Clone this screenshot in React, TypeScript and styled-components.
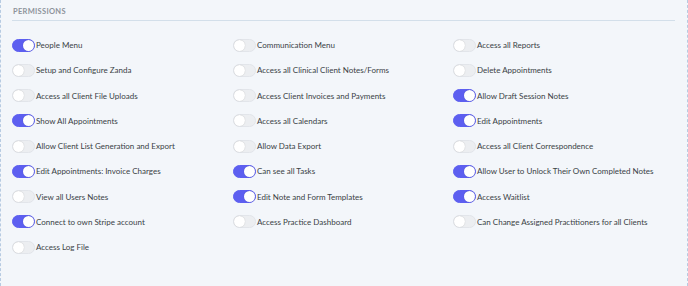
import React from 'react';
import styled, { createGlobalStyle } from 'styled-components';

const GlobalStyle = createGlobalStyle`
    html, body {
        margin: 0;
        padding: 0;
        background: #f3f6fa;
    }
`;

const Panel = styled.div`
    box-sizing: border-box;
    width: 688px;
    height: 286px;
    background: #f3f6fa;
    border-left: 1px dashed #b7cbe2;
    border-right: 1px dashed #b7cbe2;
    padding: 6px 12px 0 11px;
    font-family: Lato, "Open Sans", sans-serif;
`;

const Heading = styled.div`
    font-size: 7.5px;
    font-weight: 700;
    letter-spacing: 0.3px;
    color: #8d939b;
    text-transform: uppercase;
    padding: 1px 0 4px 1px;
    border-bottom: 1px solid #d3dfea;
`;

const Grid = styled.div`
    display: grid;
    grid-template-columns: 221px 220px 1fr;
    grid-auto-rows: 25.25px;
    margin-top: 17px;
`;

const Item = styled.label`
    display: flex;
    align-items: center;
    height: 14px;
    font-size: 8px;
    color: #3a3f45;
    white-space: nowrap;
`;

const Switch = styled.span<{ $on: boolean }>`
    position: relative;
    box-sizing: border-box;
    width: 23px;
    height: 13px;
    margin-right: 1px;
    border-radius: 7px;
    flex-shrink: 0;
    background: ${(p) => (p.$on ? '#5d5ff0' : '#eceef1')};
    border: 1px solid ${(p) => (p.$on ? '#5d5ff0' : '#e2e5ea')};

    &::after {
        content: '';
        position: absolute;
        top: 0px;
        left: ${(p) => (p.$on ? '10px' : '0px')};
        width: 11px;
        height: 11px;
        border-radius: 50%;
        background: #fff;
        box-shadow: 0 0 1px rgba(0, 0, 0, 0.25);
    }
`;

const permissions: [string, boolean][] = [
    ['People Menu', true],
    ['Communication Menu', false],
    ['Access all Reports', false],
    ['Setup and Configure Zanda', false],
    ['Access all Clinical Client Notes/Forms', false],
    ['Delete Appointments', false],
    ['Access all Client File Uploads', false],
    ['Access Client Invoices and Payments', false],
    ['Allow Draft Session Notes', true],
    ['Show All Appointments', true],
    ['Access all Calendars', false],
    ['Edit Appointments', true],
    ['Allow Client List Generation and Export', false],
    ['Allow Data Export', false],
    ['Access all Client Correspondence', false],
    ['Edit Appointments: Invoice Charges', true],
    ['Can see all Tasks', true],
    ['Allow User to Unlock Their Own Completed Notes', true],
    ['View all Users Notes', false],
    ['Edit Note and Form Templates', true],
    ['Access Waitlist', true],
    ['Connect to own Stripe account', true],
    ['Access Practice Dashboard', false],
    ['Can Change Assigned Practitioners for all Clients', false],
    ['Access Log File', false],
];

const App = () => {
    return (
        <>
            <GlobalStyle />
            <Panel>
                <Heading>Permissions</Heading>
                <Grid>
                    {permissions.map(([name, on]) => (
                        <Item key={name}>
                            <Switch $on={on} />
                            {name}
                        </Item>
                    ))}
                </Grid>
            </Panel>
        </>
    );
};

export default App;
